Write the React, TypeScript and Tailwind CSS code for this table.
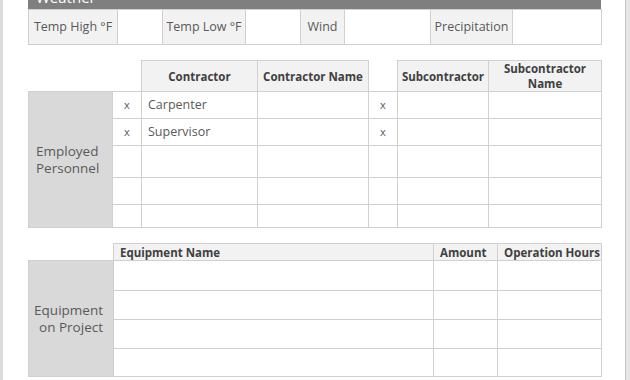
const cell = "border border-[#d0d0d0] p-0";

function WeatherRow() {
  const items = [
    ["Temp High °F", 89, 45],
    ["Temp Low °F", 83, 55],
    ["Wind", 44, 86],
    ["Precipitation", 82, 89],
  ] as const;
  return (
    <table className="w-[573px] table-fixed border-collapse">
      <colgroup>
        {items.map(([label, a, b]) => [
          <col key={label + "a"} style={{ width: a }} />,
          <col key={label + "b"} style={{ width: b }} />,
        ])}
      </colgroup>
      <tbody>
        <tr className="h-[35px]">
          {items.map(([label]) => [
            <td key={label} className={`${cell} bg-[#f2f2f2] text-center text-[12.5px] text-[#595959]`}>
              {label}
            </td>,
            <td key={label + "v"} className={cell}></td>,
          ])}
        </tr>
      </tbody>
    </table>
  );
}

function PersonnelTable() {
  const rows = [
    { x1: "x", name: "Carpenter", x2: "x", h: "h-[27px]" },
    { x1: "x", name: "Supervisor", x2: "x", h: "h-[27px]" },
    { x1: "", name: "", x2: "", h: "h-[32px]" },
    { x1: "", name: "", x2: "", h: "h-[27px]" },
    { x1: "", name: "", x2: "", h: "h-[23px]" },
  ];
  const head = `${cell} bg-[#f2f2f2] text-center font-bold text-[#404040] text-[11.5px] leading-[15px]`;
  return (
    <table className="w-[573px] table-fixed border-collapse">
      <colgroup>
        <col className="w-[84px]" />
        <col className="w-[29px]" />
        <col className="w-[116px]" />
        <col className="w-[111px]" />
        <col className="w-[29px]" />
        <col className="w-[91px]" />
        <col className="w-[113px]" />
      </colgroup>
      <tbody>
        <tr className="h-[28px]">
          <td colSpan={2} className="p-0"></td>
          <td className={head}>Contractor</td>
          <td className={head}>Contractor Name</td>
          <td className="border-b border-[#d0d0d0] p-0"></td>
          <td className={head}>Subcontractor</td>
          <td className={head}>
            Subcontractor
            <br />
            Name
          </td>
        </tr>
        {rows.map((r, i) => (
          <tr key={i} className={r.h}>
            {i === 0 && (
              <td
                rowSpan={5}
                className={`${cell} bg-[#d9d9d9] pl-[7px] text-left text-[13.5px] leading-[17px] text-[#595959]`}
              >
                Employed
                <br />
                Personnel
              </td>
            )}
            <td className={`${cell} text-center text-[11px] text-[#595959]`}>{r.x1}</td>
            <td className={`${cell} pl-[6px] text-[12.5px] text-[#595959]`}>{r.name}</td>
            <td className={cell}></td>
            <td className={`${cell} text-center text-[11px] text-[#595959]`}>{r.x2}</td>
            <td className={cell}></td>
            <td className={cell}></td>
          </tr>
        ))}
      </tbody>
    </table>
  );
}

function EquipmentTable() {
  const head = `${cell} bg-[#f2f2f2] pl-[6px] text-left font-bold text-[#404040] text-[11.5px] leading-[15px]`;
  const heights = ["h-[30px]", "h-[29px]", "h-[29px]", "h-[28px]"];
  return (
    <table className="w-[573px] table-fixed border-collapse">
      <colgroup>
        <col className="w-[85px]" />
        <col className="w-[320px]" />
        <col className="w-[64px]" />
        <col className="w-[104px]" />
      </colgroup>
      <tbody>
        <tr className="h-[17px]">
          <td className="p-0"></td>
          <td className={head}>Equipment Name</td>
          <td className={head}>Amount</td>
          <td className={head}>Operation Hours</td>
        </tr>
        {heights.map((h, i) => (
          <tr key={i} className={h}>
            {i === 0 && (
              <td
                rowSpan={4}
                className={`${cell} bg-[#d9d9d9] pr-[10px] text-right text-[13.5px] leading-[17px] text-[#595959]`}
              >
                Equipment
                <br />
                on Project
              </td>
            )}
            <td className={cell}></td>
            <td className={cell}></td>
            <td className={cell}></td>
          </tr>
        ))}
      </tbody>
    </table>
  );
}

export default function App() {
  return (
    <div className="flex h-[380px] w-[630px] overflow-hidden bg-white font-['Open_Sans',sans-serif] text-[12px] text-[#595959]">
      <div className="h-full w-[3px] bg-[#dcdcdc]" />
      <div className="flex w-[622px] flex-col pl-[25px]">
        <div className="-mt-[13px] h-[22px] w-[573px] shrink-0 bg-[#7f7f7f] pl-[8px] text-[15px] leading-[20px] text-white">
          Weather
        </div>
        <WeatherRow />
        <div className="h-[15px] shrink-0" />
        <PersonnelTable />
        <div className="h-[15px] shrink-0" />
        <EquipmentTable />
      </div>
      <div className="h-full w-[5px] border-l border-[#c4c4c4] bg-[#e6e6e6]" />
    </div>
  );
}
